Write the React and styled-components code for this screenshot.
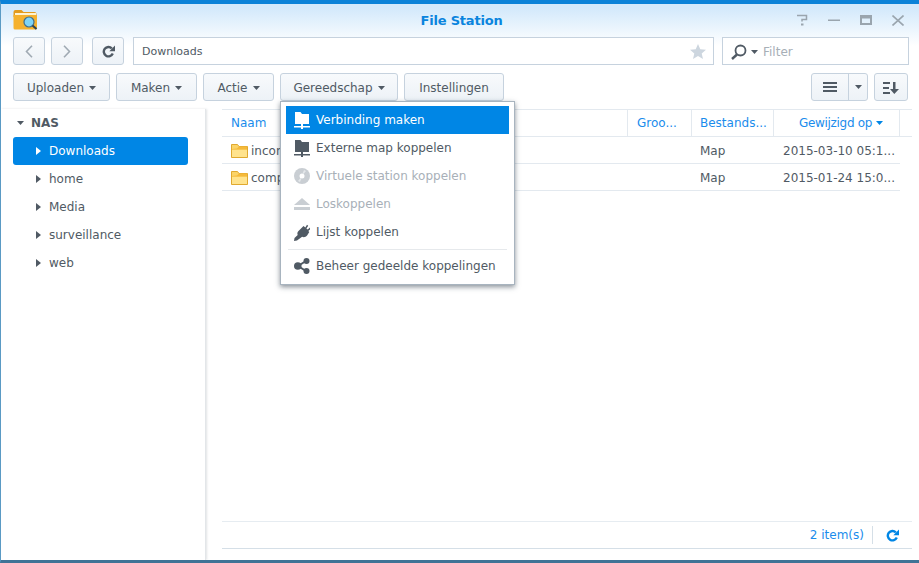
import React from "react";
import styled, { createGlobalStyle } from "styled-components";

const GlobalStyle = createGlobalStyle`
  html, body { margin: 0; padding: 0; background: #fff; }
  body { font-family: "DejaVu Sans", Verdana, sans-serif; font-size: 12px; color: #505a64; }
`;

const TREE = ["Downloads", "home", "Media", "surveillance", "web"];

const FILES = [
  { name: "incoming", type: "Map", date: "2015-03-10 05:1..." },
  { name: "complete", type: "Map", date: "2015-01-24 15:0..." },
];

const COLUMNS = [
  { label: "Naam", width: 406, pad: 9 },
  { label: "Groo...", width: 64, pad: 9 },
  { label: "Bestands...", width: 82, pad: 8 },
  { label: "Gewijzigd op", width: 126, pad: 9, sorted: true },
];

function Caret({ color = "#505a64" }) {
  return (
    <svg width="7" height="4" viewBox="0 0 7 4">
      <path d="M0 0h7L3.5 4z" fill={color} />
    </svg>
  );
}

function TreeArrow({ color }) {
  return (
    <svg width="5" height="8" viewBox="0 0 5 8">
      <path d="M0 0l5 4-5 4z" fill={color} />
    </svg>
  );
}

function FolderIcon() {
  return (
    <svg width="17" height="15" viewBox="0 0 17 15">
      <path d="M.5 14.5V1.5h6l1.500 2h8.500v11z" fill="#fbd468" stroke="#e0a92f" />
      <path d="M1 6l5-.5 2-2h8v3H1z" fill="#f5b93a" />
      <path d="M1 7h15v7H1z" fill="#ffe38d" />
    </svg>
  );
}

function NetworkFolder({ color }) {
  return (
    <svg width="16" height="17" viewBox="0 0 16 17">
      <path d="M1 0h5.500l1.500 2h7v10H1z" fill={color} />
      <path d="M7 12h2v2h7v1.500H9V17H7v-1.500H0V14h7z" fill={color} />
    </svg>
  );
}

function DiscIcon() {
  return (
    <svg width="16" height="16" viewBox="0 0 16 16">
      <circle cx="8" cy="8" r="8" fill="#c9ced3" />
      <circle cx="8" cy="8" r="2.500" fill="#fff" />
      <path d="M10 2l2 1-2.500 3-1-.5zM6 14l-2-1 2.500-3 1 .5z" fill="#e4e7ea" />
    </svg>
  );
}

function EjectIcon() {
  return (
    <svg width="16" height="12" viewBox="0 0 16 12">
      <path d="M8 0l8 7H0z" fill="#c9ced3" />
      <path d="M0 9h16v3H0z" fill="#c9ced3" />
    </svg>
  );
}

function PlugIcon() {
  return (
    <svg width="16" height="17" viewBox="0 0 16 17">
      <path
        d="M9.500 2l1.800 1.500L13 .8l1.200 1-1.800 2.700 1.300 1.100 2.300-2 .8 1.100-2.500 2.300 1 1-2.200 3.500c-1.500 1.800-3.600 2-5 1.200L3 16.500 0 17l.5-3 3.200-3c-.7-1.500-.3-3.400 1.300-4.600z"
        fill="#505a64"
      />
    </svg>
  );
}

function ShareIcon() {
  return (
    <svg width="16" height="16" viewBox="0 0 16 16">
      <path d="M12 3L4 8l8 5" fill="none" stroke="#505a64" strokeWidth="2" />
      <circle cx="12.500" cy="3" r="3" fill="#505a64" />
      <circle cx="3.800" cy="8" r="3.800" fill="#505a64" />
      <circle cx="12.500" cy="13" r="3" fill="#505a64" />
    </svg>
  );
}

function RefreshIcon({ color }) {
  return (
    <svg width="13" height="13" viewBox="0 0 13 13">
      <path d="M10.800 8.600A4.700 4.700 0 1 1 9.800 3.300" fill="none" stroke={color} strokeWidth="2.400" />
      <path d="M7.300 6.300H13V.6z" fill={color} />
    </svg>
  );
}

function AppLogo() {
  return (
    <svg width="25" height="21" viewBox="0 0 25 21">
      <path d="M.5 3a2 2 0 0 1 2-2h6l2 2h11a2 2 0 0 1 2 2v3H.5z" fill="#e39b1d" />
      <path d="M2 4h21v3H2z" fill="#fff3cf" />
      <path d="M.5 6h23.500v13a1.500 1.500 0 0 1-1.500 1.500H2A1.500 1.500 0 0 1 .5 19z" fill="#f5b12e" />
      <circle cx="16" cy="13" r="5" fill="#7fd4f7" stroke="#3f6f8c" strokeWidth="1.200" />
      <path d="M19.500 16.500l4 3.500" stroke="#2f4452" strokeWidth="2" />
    </svg>
  );
}

const MENU = [
  { label: "Verbinding maken", icon: <NetworkFolder color="#fff" />, active: true },
  { label: "Externe map koppelen", icon: <NetworkFolder color="#505a64" /> },
  { label: "Virtuele station koppelen", icon: <DiscIcon />, disabled: true },
  { label: "Loskoppelen", icon: <EjectIcon />, disabled: true },
  { label: "Lijst koppelen", icon: <PlugIcon /> },
  { divider: true },
  { label: "Beheer gedeelde koppelingen", icon: <ShareIcon /> },
];

export default function App() {
  return (
    <Win>
      <GlobalStyle />
      <TitleBar>
        <LogoSlot>
          <AppLogo />
        </LogoSlot>
        <Title>File Station</Title>
        <WinControls>
          <svg width="12" height="12" viewBox="0 0 12 12">
            <path d="M1 1.500h9.500v4H6v2" fill="none" stroke="#9aa5ae" strokeWidth="1.500" />
            <path d="M5 9.500h2.500V11.500H5z" fill="#9aa5ae" />
          </svg>
          <svg width="12" height="12" viewBox="0 0 12 12">
            <path d="M0 5.500h12v1.500H0z" fill="#9aa5ae" />
          </svg>
          <svg width="12" height="10" viewBox="0 0 12 10">
            <path d="M0 0h12v10H0zM2 3.500V8h8V3.500z" fill="#9aa5ae" fillRule="evenodd" />
          </svg>
          <svg width="12" height="11" viewBox="0 0 12 11">
            <path d="M.5.500l11 10M11.500.500l-11 10" stroke="#9aa5ae" strokeWidth="1.600" />
          </svg>
        </WinControls>
      </TitleBar>

      <NavRow>
        <IconButton>
          <svg width="8" height="13" viewBox="0 0 8 13">
            <path d="M7 .700L1.500 6.500 7 12.300" fill="none" stroke="#a0aab3" strokeWidth="1.600" />
          </svg>
        </IconButton>
        <IconButton>
          <svg width="8" height="13" viewBox="0 0 8 13">
            <path d="M1 .700l5.500 5.800L1 12.300" fill="none" stroke="#a0aab3" strokeWidth="1.600" />
          </svg>
        </IconButton>
        <RefreshButton>
          <RefreshIcon color="#505a64" />
        </RefreshButton>
        <AddressBar>
          <span>Downloads</span>
          <svg width="16" height="15" viewBox="0 0 16 15">
            <path d="M8 0l2.300 5.200 5.700.5-4.300 3.800 1.300 5.500L8 12.100 3 15l1.300-5.500L0 5.700l5.700-.5z" fill="#cdd6df" />
          </svg>
        </AddressBar>
        <FilterBox>
          <svg width="16" height="16" viewBox="0 0 16 16">
            <circle cx="9.500" cy="6.500" r="5" fill="none" stroke="#505a64" strokeWidth="1.800" />
            <path d="M6 10.500l-5 4.500" stroke="#505a64" strokeWidth="2.400" />
          </svg>
          <Caret />
          <FilterText>Filter</FilterText>
        </FilterBox>
      </NavRow>

      <ActionRow>
        <ActionButton $w={97}>
          Uploaden <Caret />
        </ActionButton>
        <ActionButton $w={81}>
          Maken <Caret />
        </ActionButton>
        <ActionButton $w={71}>
          Actie <Caret />
        </ActionButton>
        <MenuAnchor>
          <ActionButton $w={118}>
            Gereedschap <Caret />
          </ActionButton>
          <Menu>
            {MENU.map((item, i) =>
              item.divider ? (
                <MenuDivider key={i} />
              ) : (
                <MenuItem key={item.label} $active={item.active} $disabled={item.disabled}>
                  <MenuIcon>{item.icon}</MenuIcon>
                  {item.label}
                </MenuItem>
              )
            )}
          </Menu>
        </MenuAnchor>
        <ActionButton $w={100}>Instellingen</ActionButton>
        <RightTools>
          <SplitButton>
            <SplitMain>
              <svg width="14" height="10" viewBox="0 0 14 10">
                <path d="M0 0h14v2H0zM0 4h14v2H0zM0 8h14v2H0z" fill="#505a64" />
              </svg>
            </SplitMain>
            <SplitSide>
              <Caret />
            </SplitSide>
          </SplitButton>
          <SortButton>
            <svg width="16" height="12" viewBox="0 0 16 12">
              <path d="M0 0h7v2H0zM0 5h6v2H0zM0 10h7v2H0zM10 0h2.500v7H16l-4.700 5L7 7h3z" fill="#505a64" />
            </svg>
          </SortButton>
        </RightTools>
      </ActionRow>

      <Body>
        <Sidebar>
          <RootNode>
            <Caret />
            NAS
          </RootNode>
          {TREE.map((name, i) => (
            <TreeItem key={name} $active={i === 0}>
              <TreeArrow color={i === 0 ? "#fff" : "#505a64"} />
              {name}
            </TreeItem>
          ))}
        </Sidebar>
        <Main>
          <HeaderRow>
            {COLUMNS.map((col) => (
              <HeaderCell key={col.label} $w={col.width} $pad={col.pad} $sorted={col.sorted}>
                {col.label}
                {col.sorted && <Caret color="#0086e5" />}
              </HeaderCell>
            ))}
          </HeaderRow>
          {FILES.map((file) => (
            <FileRow key={file.name}>
              <NameCell>
                <FolderIcon />
                {file.name}
              </NameCell>
              <Cell $w={64} />
              <TypeCell>{file.type}</TypeCell>
              <Cell $w={126}>{file.date}</Cell>
            </FileRow>
          ))}
          <Spacer />
          <Footer>
            <span>2 item(s)</span>
            <FooterRule />
            <RefreshIcon color="#0086e5" />
          </Footer>
        </Main>
      </Body>
    </Win>
  );
}

const Win = styled.div`
  box-sizing: border-box;
  width: 919px;
  height: 563px;
  display: flex;
  flex-direction: column;
  overflow: hidden;
  background: linear-gradient(#d3e9fb 4px, #fff 42px);
  border-top: 4px solid #0b82d8;
  border-left: 1px solid #5a9ac4;
  border-bottom: 3px solid #3f7396;
`;

const TitleBar = styled.div`
  display: flex;
  align-items: center;
  justify-content: center;
  height: 33px;
  flex: none;
  position: relative;
`;

const LogoSlot = styled.div`
  position: absolute;
  left: 12px;
  top: 5px;
  display: flex;
`;

const Title = styled.div`
  font-size: 13px;
  font-weight: 700;
  letter-spacing: -0.2px;
  padding-left: 3px;
  color: #0a84de;
`;

const WinControls = styled.div`
  position: absolute;
  right: 15px;
  top: 10px;
  display: flex;
  align-items: center;
  gap: 20px;
`;

const NavRow = styled.div`
  display: flex;
  flex: none;
  height: 28px;
  padding-left: 12px;
  gap: 6px;
`;

const ButtonBase = styled.button`
  box-sizing: border-box;
  height: 28px;
  padding: 1px 0 0;
  border: 1px solid #c6d2de;
  border-radius: 3px;
  background: linear-gradient(#f8fafc, #edf2f7);
  font-family: inherit;
  font-size: 12px;
  color: #505a64;
  display: flex;
  align-items: center;
  justify-content: center;
`;

const IconButton = styled(ButtonBase)`
  width: 32px;
`;

const RefreshButton = styled(IconButton)`
  margin-left: 3px;
`;

const FieldBox = styled.div`
  box-sizing: border-box;
  height: 28px;
  padding-top: 1px;
  background: #fff;
  border: 1px solid #c6d2de;
  display: flex;
  align-items: center;
`;

const AddressBar = styled(FieldBox)`
  width: 581px;
  margin-left: 3px;
  padding-left: 8px;
  padding-right: 7px;
  justify-content: space-between;
  font-size: 11px;
`;

const FilterBox = styled(FieldBox)`
  width: 187px;
  margin-left: 2px;
  padding-left: 8px;
  gap: 4px;
`;

const FilterText = styled.span`
  color: #a7afb7;
  margin-left: 1px;
`;

const ActionRow = styled.div`
  display: flex;
  flex: none;
  height: 28px;
  margin-top: 8px;
  padding-left: 12px;
  padding-right: 11px;
  gap: 6px;
`;

const ActionButton = styled(ButtonBase)`
  width: ${(p) => p.$w}px;
  gap: 5px;
  white-space: nowrap;
`;

const MenuAnchor = styled.div`
  position: relative;
`;

const Menu = styled.div`
  position: absolute;
  z-index: 5;
  left: 0;
  top: 28px;
  box-sizing: border-box;
  width: 235px;
  height: 184px;
  padding: 4px 5px;
  background: #fff;
  border: 1px solid #a8b4bf;
  box-shadow: 0 2px 5px rgba(40, 55, 70, 0.55);
`;

const MenuItem = styled.div`
  display: flex;
  align-items: center;
  height: 28px;
  white-space: nowrap;
  color: ${(p) => (p.$active ? "#fff" : p.$disabled ? "#a8b0b8" : "#505a64")};
  background: ${(p) => (p.$active ? "#0086e5" : "transparent")};
`;

const MenuIcon = styled.span`
  width: 30px;
  padding-left: 8px;
  box-sizing: border-box;
  display: flex;
  align-items: center;
  flex: none;
`;

const MenuDivider = styled.div`
  height: 1px;
  margin: 3px 2px 2px 2px;
  background: #e6e9ec;
`;

const RightTools = styled.div`
  margin-left: auto;
  display: flex;
  gap: 6px;
`;

const SplitButton = styled(ButtonBase)`
  width: 57px;
  padding: 0;
  justify-content: flex-start;
`;

const SplitMain = styled.span`
  width: 36px;
  height: 100%;
  display: flex;
  align-items: center;
  justify-content: center;
  border-right: 1px solid #c6d2de;
`;

const SplitSide = styled.span`
  flex: 1;
  display: flex;
  align-items: center;
  justify-content: center;
`;

const SortButton = styled(ButtonBase)`
  width: 34px;
`;

const Body = styled.div`
  flex: 1;
  min-height: 0;
  display: flex;
  margin-top: 8px;
`;

const Sidebar = styled.div`
  box-sizing: border-box;
  width: 205px;
  flex: none;
  padding: 0 17px 0 12px;
  background: #fff;
  border-right: 1px solid #e3e6e9;
  box-shadow: 1px 0 2px rgba(90, 100, 110, 0.18);
`;

const RootNode = styled.div`
  display: flex;
  align-items: center;
  gap: 7px;
  height: 28px;
  padding-left: 4px;
  font-weight: 700;
`;

const TreeItem = styled.div`
  display: flex;
  align-items: center;
  gap: 8px;
  height: 28px;
  padding-left: 23px;
  border-radius: 3px;
  color: ${(p) => (p.$active ? "#fff" : "#505a64")};
  background: ${(p) => (p.$active ? "#0086e5" : "transparent")};
`;

const Main = styled.div`
  flex: 1;
  min-width: 0;
  display: flex;
  flex-direction: column;
  padding: 0 7px 0 16px;
`;

const HeaderRow = styled.div`
  display: flex;
  flex: none;
  height: 28px;
  box-sizing: border-box;
  border-top: 1px solid #e3e9ef;
  border-bottom: 1px solid #e3e9ef;
`;

const HeaderCell = styled.div`
  box-sizing: border-box;
  width: ${(p) => p.$w}px;
  flex: none;
  display: flex;
  align-items: center;
  justify-content: ${(p) => (p.$sorted ? "center" : "flex-start")};
  gap: 4px;
  padding-left: ${(p) => p.$pad}px;
  letter-spacing: ${(p) => (p.$sorted ? "-0.3px" : "0")};
  color: #1a8cec;
  white-space: nowrap;
  border-right: 1px solid #e3e9ef;
`;

const FileRow = styled.div`
  display: flex;
  flex: none;
  height: 27px;
  width: 678px;
  box-sizing: border-box;
  padding-top: 1px;
  border-bottom: 1px solid #e3e9ef;
`;

const Cell = styled.div`
  box-sizing: border-box;
  width: ${(p) => p.$w}px;
  flex: none;
  display: flex;
  align-items: center;
  padding-left: 9px;
  white-space: nowrap;
`;

const NameCell = styled(Cell)`
  width: 406px;
  gap: 3px;
`;

const TypeCell = styled(Cell)`
  width: 82px;
  padding-left: 8px;
`;

const Spacer = styled.div`
  flex: 1;
`;

const Footer = styled.div`
  flex: none;
  height: 28px;
  margin-bottom: 11px;
  box-sizing: border-box;
  display: flex;
  align-items: center;
  justify-content: flex-end;
  padding-right: 13px;
  color: #1a8cec;
  border-top: 1px solid #e6ecf1;
  border-bottom: 1px solid #d5dfe7;
`;

const FooterRule = styled.span`
  width: 1px;
  height: 18px;
  margin: 0 13px 0 8px;
  background: #d5dfe7;
`;
